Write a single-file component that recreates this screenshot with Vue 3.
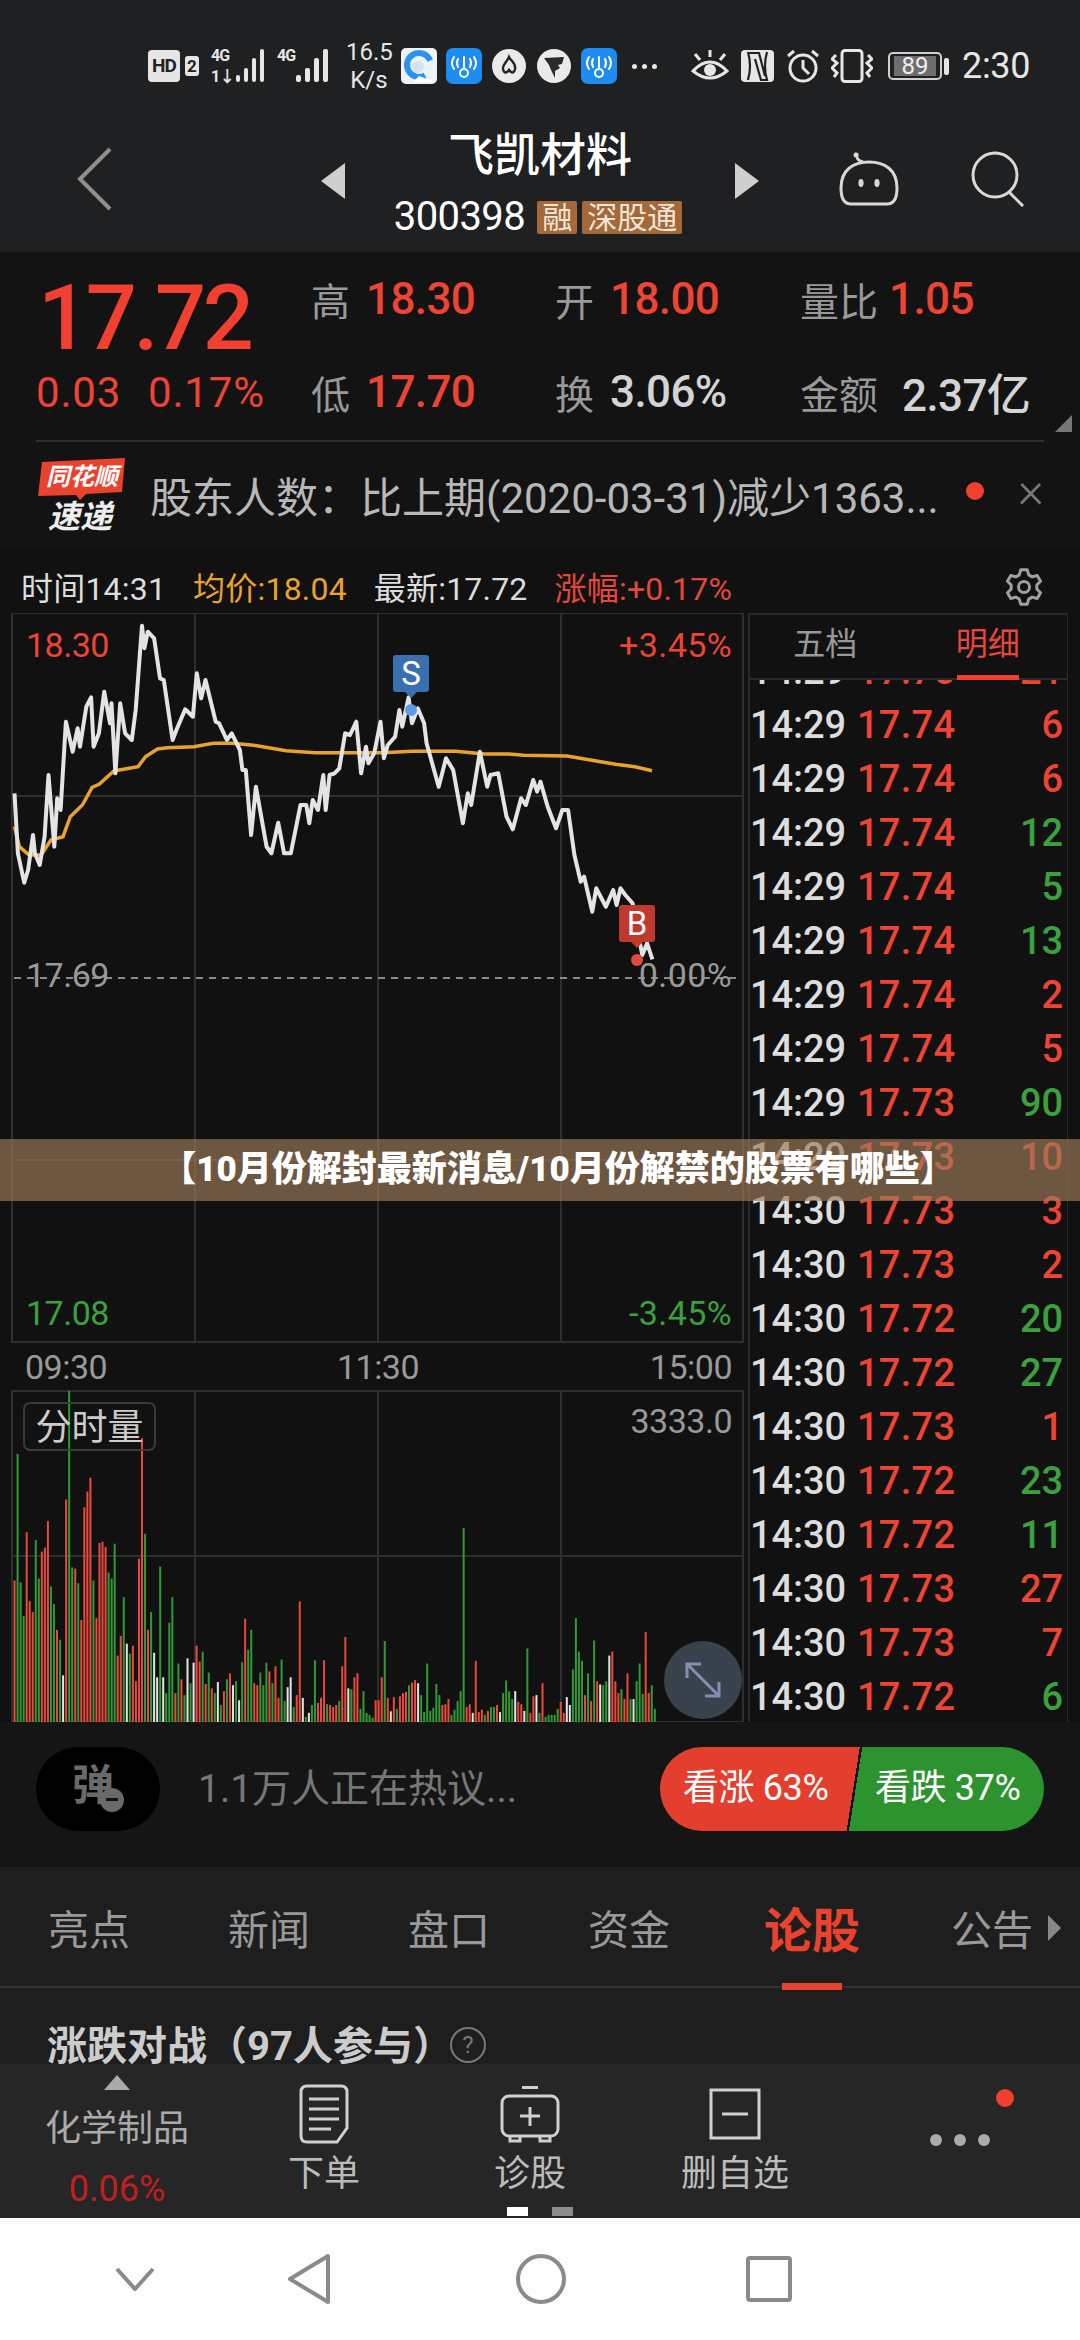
<script setup>
import { computed } from "vue";

// traced from the chart, coordinates are on a 2.063 / 3 grid above y=560
const priceRaw = "30,700 37,880 50,968 58,930 68,825 72,880 82,915 92,830 100,645 112,860 118,715 125,750 136,485 150,575 160,505 165,560 178,440 188,412 193,560 204,520 215,395 227,490 230,430 238,640 248,430 258,520 272,540 280,450 293,197 298,265 305,215 318,235 330,355 338,360 356,540 364,510 382,448 398,470 406,340 415,415 424,360 445,485 452,490 468,540 478,520 495,570 500,630 507,630 518,825 528,680 550,860 560,880 574,788 586,880 600,880 620,735 632,735 638,790 645,720 656,750 667,645 672,750 680,645 690,640 700,625 712,520 722,525 735,485 745,640 755,560 760,610 772,580 785,485 792,595 800,555 815,530 824,450 830,500 843,412 850,490 862,445 875,490 880,550 905,680 920,595 935,630 955,790 965,700 972,735 990,575 1005,680 1012,645 1028,640 1045,770 1058,808 1075,715 1085,735 1100,660 1108,695 1115,665 1130,740 1147,805 1160,750 1172,750 1185,885 1198,965 1205,950 1222,1055 1230,985 1250,1040 1265,990 1272,1035 1280,985 1290,1005 1305,1030 1315,1110 1325,1185 1335,1150 1346,1198";
const avgRaw = "30,800 40,860 60,885 85,885 105,840 130,830 145,770 170,735 190,682 205,672 235,633 285,620 300,590 325,567 345,563 400,560 440,550 480,550 530,557 590,572 650,578 790,578 850,574 940,574 1000,582 1050,582 1080,586 1170,588 1230,603 1270,613 1310,620 1345,632";

const toPoints = (raw) =>
  raw
    .split(" ")
    .map((p) => {
      const [x, y] = p.split(",").map(Number);
      return `${(x / 2.063).toFixed(1)},${(560 + y / 3).toFixed(1)}`;
    })
    .join(" ");

const pricePoints = toPoints(priceRaw);
const avgPoints = toPoints(avgRaw);

const volRaw = "r1165 g845 g1170 g1255 r1043 r1217 r1245 g1063 g1160 r1092 r1082 r1015 g1180 g1225 r1290 g1315 w1405 r960 g685 g1132 r1135 g1172 r1265 r980 r940 r905 g1165 r1260 r1070 r1067 r1080 g1145 g1160 g1072 r1355 r1305 g1207 w1325 g1350 r1330 r1420 r1110 r805 g1047 r1290 g1245 w1348 w1410 g1130 w1410 g1450 g1272 g1207 r1450 g1375 r1415 g1455 w1362 g1425 w1373 r1330 r1370 g1345 r1427 g1398 r1438 g1450 w1422 g1480 r1445 g1415 r1400 w1430 g1420 w1468 g1372 r1262 g1340 g1290 r1425 r1430 g1398 g1430 g1373 r1395 g1425 r1382 r1462 g1365 g1470 w1435 w1410 g1485 r1455 r1218 w1462 g1510 w1500 g1480 g1367 r1475 r1462 r1367 g1478 r1480 r1485 r1480 g1470 r1382 r1308 w1438 g1440 r1410 r1400 g1490 g1445 g1500 g1505 g1512 r1468 r1468 r1410 g1318 r1462 w1496 r1460 g1490 r1458 r1450 r1447 g1430 r1423 r1417 w1425 g1455 g1498 g1375 g1495 g1487 g1427 g1455 r1480 r1478 r1465 g1505 g1492 g1470 g1445 g1032 r1485 r1478 w1500 r1368 r1498 r1492 g1505 r1495 g1485 g1485 r1480 w1498 g1450 g1418 g1445 g1465 w1445 r1472 r1478 w1495 g1337 r1500 r1458 w1455 g1500 r1425 g1510 g1505 g1505 g1505 g1490 r1472 r1500 w1460 w1480 g1390 g1260 g1345 g1368 r1455 g1400 r1470 g1317 r1420 w1428 g1430 g1420 w1355 r1345 r1420 r1450 g1440 r1465 r1400 g1465 w1465 g1420 g1375 g1452 r1295 r1450 g1430 g1490";
const volColors = { r: "#ea4a3b", g: "#2f9a36", w: "#e4e4e4" };

const volBars = computed(() =>
  volRaw.split(" ").map((b, i) => {
    const top = 1120 + Number(b.slice(1)) / 2.53;
    return {
      x: (30 + i * 6.26) / 2.063 - 1,
      y: top,
      h: 1722 - top,
      fill: volColors[b[0]],
    };
  })
);

// six teeth, one straight up
const gearPath = computed(() => {
  const pts = [];
  for (let i = 0; i < 6; i++) {
    const a = -90 + i * 60;
    [[13, -21], [17.5, -11], [17.5, 11], [13, 21]].forEach(([r, d]) => {
      const rad = ((a + d) * Math.PI) / 180;
      pts.push(`${(19 + r * Math.cos(rad)).toFixed(1)} ${(19 + r * Math.sin(rad)).toFixed(1)}`);
    });
  }
  return `M${pts.join(" L")} Z`;
});

const ticks = [
  ["14:29", "17.75", "21", "r"],
  ["14:29", "17.74", "6", "r"],
  ["14:29", "17.74", "6", "r"],
  ["14:29", "17.74", "12", "g"],
  ["14:29", "17.74", "5", "g"],
  ["14:29", "17.74", "13", "g"],
  ["14:29", "17.74", "2", "r"],
  ["14:29", "17.74", "5", "r"],
  ["14:29", "17.73", "90", "g"],
  ["14:29", "17.73", "10", "r"],
  ["14:30", "17.73", "3", "r"],
  ["14:30", "17.73", "2", "r"],
  ["14:30", "17.72", "20", "g"],
  ["14:30", "17.72", "27", "g"],
  ["14:30", "17.73", "1", "r"],
  ["14:30", "17.72", "23", "g"],
  ["14:30", "17.72", "11", "g"],
  ["14:30", "17.73", "27", "r"],
  ["14:30", "17.73", "7", "r"],
  ["14:30", "17.72", "6", "g"],
];

const tabs = ["亮点", "新闻", "盘口", "资金", "论股", "公告"];
</script>

<template>
  <div class="page">
    <header class="top">
      <div class="status">
        <span class="hd">HD</span>
        <span class="sim">2</span>
        <svg class="sig" width="56" height="36" viewBox="0 0 56 36">
          <text x="0" y="13" class="sig-t">4G</text>
          <text x="0" y="34" class="sig-t">1↓</text>
          <rect x="25" y="27" width="4" height="7" rx="2" fill="#e6e6e6" />
          <rect x="33" y="20" width="4" height="14" rx="2" fill="#e6e6e6" />
          <rect x="41" y="10" width="4" height="24" rx="2" fill="#e6e6e6" />
          <rect x="49" y="1" width="4" height="33" rx="2" fill="#e6e6e6" />
        </svg>
        <svg class="sig sig2" width="56" height="36" viewBox="0 0 56 36">
          <text x="0" y="13" class="sig-t">4G</text>
          <rect x="19" y="27" width="5" height="7" rx="2" fill="#e6e6e6" />
          <rect x="28" y="20" width="5" height="14" rx="2" fill="#e6e6e6" />
          <rect x="37" y="10" width="5" height="24" rx="2" fill="#e6e6e6" />
          <rect x="46" y="1" width="5" height="33" rx="2" fill="#e6e6e6" />
        </svg>
        <span class="speed">16.5<br />K/s</span>
        <svg class="app" width="36" height="36" viewBox="0 0 36 36">
          <rect width="36" height="36" rx="5" fill="#eef3f8" />
          <circle cx="18" cy="17" r="12" fill="none" stroke="#2a93ee" stroke-width="6" stroke-dasharray="58 20" transform="rotate(60 18 17)" />
          <circle cx="17" cy="19" r="6" fill="#cfe3f5" />
          <path d="M18 28 L34 34 L12 34 Z" fill="#fff" />
        </svg>
        <svg class="app" width="36" height="36" viewBox="0 0 36 36">
          <rect width="36" height="36" rx="7" fill="#1e8cf0" />
          <g fill="none" stroke="#fff" stroke-width="2" stroke-linecap="round">
            <path d="M8 9 Q4 15 8 21 M12 11 Q10 15 12 19 M24 11 Q26 15 24 19 M28 9 Q32 15 28 21" />
            <circle cx="18" cy="25" r="4" />
            <path d="M18 9 V21" />
          </g>
        </svg>
        <svg class="app" width="36" height="36" viewBox="0 0 36 36">
          <circle cx="18" cy="18" r="17" fill="#eaeaea" />
          <path d="M18 9 C20 13 25 15 24 21 C23 26 20 25 18 22 C16 25 13 26 12 21 C11 17 16 14 18 9 Z" fill="none" stroke="#222" stroke-width="2.4" />
        </svg>
        <svg class="app" width="36" height="36" viewBox="0 0 36 36">
          <circle cx="18" cy="18" r="17" fill="#eaeaea" />
          <path d="M8 10 L28 9 L26 16 L22 17 L24 20 L19 23 L19 30 L15 22 L13 17 Z" fill="#2a2a2a" />
        </svg>
        <svg class="app" width="36" height="36" viewBox="0 0 36 36">
          <rect width="36" height="36" rx="7" fill="#1e8cf0" />
          <g fill="none" stroke="#fff" stroke-width="2" stroke-linecap="round">
            <path d="M8 9 Q4 15 8 21 M12 11 Q10 15 12 19 M24 11 Q26 15 24 19 M28 9 Q32 15 28 21" />
            <circle cx="18" cy="25" r="4" />
            <path d="M18 9 V21" />
          </g>
        </svg>
        <span class="more-dots"><i></i><i></i><i></i></span>
        <svg class="eye" width="38" height="34" viewBox="0 0 38 34" fill="none" stroke="#e6e6e6" stroke-width="3">
          <path d="M2 22 Q19 4 36 22 Q19 36 2 22 Z" />
          <circle cx="19" cy="21" r="6" fill="#e6e6e6" stroke="none" />
          <path d="M19 1 V8 M4 5 L9 11 M34 5 L29 11" />
        </svg>
        <svg class="nfc" width="33" height="32" viewBox="0 0 33 32">
          <rect width="33" height="32" rx="4" fill="#e6e6e6" />
          <path d="M7 2 Q11 16 7 30 M8 3 H18 L24 26 M14 9 L20 30 H26 Q22 16 26 2" fill="none" stroke="#1f2021" stroke-width="2.2" />
        </svg>
        <svg class="alarm" width="34" height="34" viewBox="0 0 34 34" fill="none" stroke="#e6e6e6" stroke-width="3">
          <circle cx="17" cy="19" r="13" />
          <path d="M17 11 V19 L23 25 M2 7 L8 2 M32 7 L26 2" />
        </svg>
        <svg class="vib" width="42" height="34" viewBox="0 0 42 34" fill="none" stroke="#e6e6e6" stroke-width="3">
          <rect x="11" y="1.5" width="20" height="31" rx="3" />
          <path d="M5 6 L1 10 L6 14 L1 19 L6 24 L3 28 M37 6 L41 10 L36 14 L41 19 L36 24 L39 28" />
        </svg>
        <span class="batt"><b>89</b></span>
        <span class="batt-nub"></span>
        <span class="clock">2:30</span>
      </div>

      <div class="nav">
        <svg class="back" width="37" height="64" viewBox="0 0 37 64">
          <path d="M34 2 L4 32 L34 62" fill="none" stroke="#8f8f8f" stroke-width="4" />
        </svg>
        <div class="stock">
          <svg class="arrow" width="24" height="36" viewBox="0 0 24 36"><path d="M24 0 V36 L0 18 Z" fill="#cfcfcf" /></svg>
          <div class="stock-info">
            <div class="stock-name">飞凯材料</div>
            <div class="stock-code">
              <span>300398</span>
              <em class="tag">融</em>
              <em class="tag">深股通</em>
            </div>
          </div>
          <svg class="arrow" width="24" height="36" viewBox="0 0 24 36"><path d="M0 0 V36 L24 18 Z" fill="#cfcfcf" /></svg>
        </div>
        <svg class="robot" width="60" height="54" viewBox="0 0 60 54" fill="none" stroke="#d8d8d8" stroke-width="3">
          <path d="M18 1 Q16 8 24 10" />
          <circle cx="17" cy="3" r="2.5" fill="#d8d8d8" stroke="none" />
          <path d="M2 36 C2 18 14 10 30 10 C46 10 58 18 58 36 C58 48 54 52 48 52 H12 C6 52 2 48 2 36 Z" />
          <ellipse cx="22" cy="31" rx="2.6" ry="4" fill="#d8d8d8" stroke="none" />
          <ellipse cx="38" cy="31" rx="2.6" ry="4" fill="#d8d8d8" stroke="none" />
        </svg>
        <svg class="search" width="54" height="56" viewBox="0 0 54 56" fill="none" stroke="#d8d8d8" stroke-width="3">
          <ellipse cx="24" cy="24" rx="22" ry="22" />
          <path d="M38 41 L52 55" />
        </svg>
      </div>
    </header>

    <section class="quote">
      <div class="quote-grid">
        <div class="cell"><span class="last">17.72</span></div>
        <div class="cell"><span class="lb one">高</span><span class="val up">18.30</span></div>
        <div class="cell"><span class="lb one">开</span><span class="val up">18.00</span></div>
        <div class="cell"><span class="lb">量比</span><span class="val up">1.05</span></div>
        <div class="cell change"><span class="up">0.03</span><span class="up">0.17%</span></div>
        <div class="cell"><span class="lb one">低</span><span class="val up">17.70</span></div>
        <div class="cell"><span class="lb one">换</span><span class="val plain">3.06%</span></div>
        <div class="cell"><span class="lb wide">金额</span><span class="val plain">2.37亿</span></div>
      </div>
      <i class="corner"></i>
      <div class="news">
        <svg class="news-logo" width="88" height="74" viewBox="0 0 88 74">
          <path d="M4 4 L87 0 L84 34 L48 36 L42 42 L38 37 L0 38 Z" fill="#e8432f" />
          <text x="44" y="27" text-anchor="middle" class="logo-a">同花顺</text>
          <text x="42" y="70" text-anchor="middle" class="logo-b">速递</text>
        </svg>
        <span class="news-text">股东人数：比上期(2020-03-31)减少1363...</span>
        <i class="news-dot"></i>
        <span class="news-x">×</span>
      </div>
    </section>

    <section class="market">
      <div class="chart-head">
        <span class="hd-time">时间14:31</span>
        <span class="hd-avg">均价:18.04</span>
        <span class="hd-new">最新:17.72</span>
        <span class="hd-pct">涨幅:+0.17%</span>
        <svg class="gear" width="38" height="38" viewBox="0 0 38 38" fill="none" stroke="#a0a0a0" stroke-width="3">
          <path :d="gearPath" stroke-linejoin="round" />
          <circle cx="19" cy="19" r="5.5" />
        </svg>
      </div>

      <div class="chart-body">
        <div class="canvas">
          <svg class="plot" width="748" height="1109" viewBox="0 613 748 1109">
            <g fill="none" stroke="#2e2e2e" stroke-width="2">
              <rect x="12" y="613" width="731" height="729" />
              <rect x="12" y="1391" width="731" height="331" />
              <path d="M195 613 V1342 M378 613 V1342 M561 613 V1342 M195 1391 V1722 M378 1391 V1722 M561 1391 V1722" />
              <path d="M12 796 H743 M12 1160 H743 M12 1556 H743" />
            </g>
            <path d="M14 978 H742" stroke="#8a8a8a" stroke-width="2" stroke-dasharray="7 6" />
            <polyline :points="avgPoints" fill="none" stroke="#e9a32c" stroke-width="3.5" />
            <polyline :points="pricePoints" fill="none" stroke="#e4e4e4" stroke-width="4" stroke-linejoin="round" />
            <rect v-for="(b, i) in volBars" :key="i" :x="b.x" :y="b.y" width="2" :height="b.h" :fill="b.fill" />
            <path d="M405 692 L411 698 L417 692 Z" fill="#3a6fb0" />
            <circle cx="411" cy="710" r="6" fill="#5a9be8" />
            <path d="M631 942 L637 948 L643 942 Z" fill="#c0392f" />
            <circle cx="637" cy="960" r="6" fill="#e04a3f" />
          </svg>

          <span class="axis up" style="left: 26px; top: 13px">18.30</span>
          <span class="axis up right pct" style="top: 13px">+3.45%</span>
          <span class="axis grey" style="left: 26px; top: 343px">17.69</span>
          <span class="axis grey right pct" style="top: 343px">0.00%</span>
          <span class="axis green" style="left: 26px; top: 681px">17.08</span>
          <span class="axis green right pct" style="top: 681px">-3.45%</span>
          <span class="axis grey" style="left: 25px; top: 735px">09:30</span>
          <span class="axis grey mid" style="top: 735px">11:30</span>
          <span class="axis grey right" style="top: 735px">15:00</span>
          <span class="axis grey right" style="top: 789px">3333.0</span>

          <span class="marker sell">S</span>
          <span class="marker buy">B</span>
          <span class="vol-tag">分时量</span>
          <span class="expand">
            <svg width="44" height="44" viewBox="0 0 44 44" fill="none" stroke="#8391b0" stroke-width="3">
              <path d="M6 6 L38 38 M6 20 V6 H20 M38 24 V38 H24" />
            </svg>
          </span>
        </div>

        <aside class="trades">
          <div class="trade-tabs">
            <span>五档</span>
            <span class="on">明细</span>
          </div>
          <div class="trade-list">
            <div v-for="(t, i) in ticks" :key="i" class="trade-row">
              <span class="t-time">{{ t[0] }}</span>
              <span class="t-price">{{ t[1] }}</span>
              <span class="t-vol" :class="t[3]">{{ t[2] }}</span>
            </div>
          </div>
        </aside>
      </div>

      <div class="banner">【10月份解封最新消息/10月份解禁的股票有哪些】</div>
    </section>

    <section class="vote">
      <div class="danmu">
        <span>弹</span>
        <i class="danmu-off"></i>
      </div>
      <span class="vote-text">1.1万人正在热议...</span>
      <div class="vote-pill">
        <span class="bull">看涨 63%</span>
        <span class="bear">看跌 37%</span>
      </div>
    </section>

    <nav class="tabs">
      <span v-for="(t, i) in tabs" :key="t" class="tab" :class="{ active: i === 4 }">{{ t }}</span>
      <i class="tab-more"></i>
    </nav>

    <div class="battle">
      <span>涨跌对战（97人参与）</span>
      <i class="help">?</i>
    </div>

    <footer class="actions">
      <div class="sector">
        <i class="sector-up"></i>
        <span class="sector-name">化学制品</span>
        <span class="sector-pct">0.06%</span>
      </div>
      <div class="act act-order">
        <svg width="50" height="60" viewBox="0 0 50 60" fill="none" stroke="#d0d0d0" stroke-width="3">
          <path d="M8 2 H42 Q48 2 48 8 V44 L38 58 H8 Q2 58 2 52 V8 Q2 2 8 2 Z" />
          <path d="M10 15 H40 M10 25 H40 M10 35 H40 M10 45 H32" />
        </svg>
        <span>下单</span>
      </div>
      <div class="act act-diag">
        <svg width="60" height="56" viewBox="0 0 60 56" fill="none" stroke="#d0d0d0" stroke-width="3">
          <path d="M22 1.5 H38" />
          <rect x="2" y="10" width="56" height="40" rx="7" />
          <path d="M30 21 V40 M20 30 H40 M10 50 V55 H20 V50 M40 50 V55 H50 V50" />
        </svg>
        <span>诊股</span>
      </div>
      <div class="act act-del">
        <svg width="52" height="52" viewBox="0 0 52 52" fill="none" stroke="#d0d0d0" stroke-width="3">
          <rect x="2" y="2" width="48" height="48" />
          <path d="M13 26 H39" />
        </svg>
        <span>删自选</span>
      </div>
      <div class="act-more">
        <i class="more-red"></i>
        <i class="d"></i><i class="d"></i><i class="d"></i>
      </div>
      <div class="pager"><i class="cur"></i><i></i></div>
    </footer>

    <div class="sysnav">
      <svg class="n-down" width="40" height="24" viewBox="0 0 40 24"><path d="M2 2 L20 22 L38 2" fill="none" stroke="#8a8a8a" stroke-width="4" /></svg>
      <svg class="n-back" width="46" height="52" viewBox="0 0 46 52"><path d="M42 3 V49 L4 26 Z" fill="none" stroke="#8a8a8a" stroke-width="4" stroke-linejoin="round" /></svg>
      <svg class="n-home" width="52" height="52" viewBox="0 0 52 52"><circle cx="26" cy="26" r="23" fill="none" stroke="#8a8a8a" stroke-width="4" /></svg>
      <svg class="n-recent" width="46" height="46" viewBox="0 0 46 46"><rect x="2" y="2" width="42" height="42" rx="2" fill="none" stroke="#8a8a8a" stroke-width="4" /></svg>
    </div>
  </div>
</template>

<style scoped>
.page {
  position: relative;
  width: 1080px;
  height: 2340px;
  overflow: hidden;
  display: flex;
  flex-direction: column;
  background: #111;
  color: #ddd;
  font-family: Roboto, "Noto Sans CJK SC", sans-serif;
}

i,
em {
  font-style: normal;
}

.top {
  height: 252px;
  background: #1f2021;
}

.status {
  height: 110px;
  padding: 22px 0 0 148px;
  box-sizing: border-box;
  display: flex;
  align-items: center;
  color: #e6e6e6;
}

.hd {
  width: 32px;
  height: 32px;
  border-radius: 4px;
  background: #e6e6e6;
  color: #222;
  font-size: 19px;
  font-weight: 700;
  line-height: 32px;
  text-align: center;
  letter-spacing: -1px;
}

.sim {
  width: 14px;
  height: 20px;
  margin-left: 5px;
  border-radius: 3px;
  background: #e6e6e6;
  color: #222;
  font-size: 17px;
  font-weight: 700;
  line-height: 20px;
  text-align: center;
}

.sig {
  margin-left: 12px;
}

.sig2 {
  margin-left: 10px;
}

.sig-t {
  font-size: 16px;
  font-weight: 700;
  fill: #e6e6e6;
  letter-spacing: -1px;
}

.speed {
  width: 46px;
  margin-left: 13px;
  font-size: 24px;
  line-height: 28px;
  text-align: center;
}

.app {
  margin-left: 9px;
  flex: none;
}

.more-dots {
  display: flex;
  gap: 5px;
  margin-left: 15px;
  width: 26px;
}

.more-dots i {
  width: 5px;
  height: 5px;
  border-radius: 50%;
  background: #e6e6e6;
}

.eye {
  margin-left: 33px;
}

.nfc {
  margin-left: 12px;
}

.alarm {
  margin-left: 12px;
}

.vib {
  margin-left: 11px;
}

.batt {
  width: 54px;
  height: 28px;
  margin-left: 15px;
  box-sizing: border-box;
  border: 2px solid #cfcfcf;
  border-radius: 5px;
  padding: 2px 4px;
}

.batt b {
  display: block;
  width: 42px;
  height: 20px;
  background: #6e6e6e;
  color: #eee;
  font-size: 24px;
  font-weight: 400;
  line-height: 21px;
  text-align: center;
}

.batt-nub {
  width: 5px;
  height: 17px;
  margin-left: 2px;
  border-radius: 2px;
  background: #e6e6e6;
}

.clock {
  margin-left: 13px;
  font-size: 36px;
  letter-spacing: -0.3px;
}

.nav {
  position: relative;
  height: 142px;
  display: flex;
  align-items: center;
  padding-left: 76px;
}

.back {
  margin-top: -4px;
}

.stock {
  width: 438px;
  margin-left: 208px;
  display: flex;
  align-items: center;
  justify-content: space-between;
}

.stock-info {
  text-align: center;
  margin-top: -6px;
}

.stock-name {
  height: 62px;
  color: #fff;
  font-size: 46px;
  font-weight: 500;
  line-height: 66px;
}

.stock-code {
  margin-top: 16px;
  margin-left: -4px;
  display: flex;
  align-items: center;
  gap: 5px;
  color: #fff;
  font-size: 40px;
  line-height: 34px;
  letter-spacing: -0.6px;
}

.stock-code span {
  margin-right: 7px;
}

.tag {
  padding: 0 5px;
  height: 33px;
  border-radius: 2px;
  background: #a3693a;
  color: #f3e6d8;
  font-size: 30px;
  line-height: 33px;
  letter-spacing: 0;
}

.robot {
  margin-left: 80px;
  margin-top: -4px;
}

.search {
  margin-left: 72px;
  margin-top: -4px;
}

.quote {
  position: relative;
  height: 296px;
  background: #131313;
}

.quote-grid {
  display: grid;
  grid-template-columns: 273px 244px 245px auto;
  grid-template-rows: 94px 92px;
  padding-left: 38px;
}

.cell {
  display: flex;
  align-items: center;
}

.last {
  margin-top: 40px;
  color: #f1402f;
  font-size: 90px;
  font-weight: 500;
  letter-spacing: -3.4px;
  line-height: 88px;
}

.lb {
  margin-right: 11px;
  color: #999;
  font-size: 39px;
}

.lb.one {
  margin-right: 16px;
}

.lb.wide {
  margin-right: 24px;
}

.val {
  font-size: 44px;
  font-weight: 500;
  letter-spacing: -0.6px;
}

.up {
  color: #ee4433;
}

.plain {
  color: #d4d4d4;
}

.change {
  gap: 27px;
  margin-left: -2px;
  font-size: 42px;
  letter-spacing: 0.8px;
  white-space: nowrap;
}

.corner {
  position: absolute;
  right: 8px;
  top: 163px;
  border-left: 17px solid transparent;
  border-bottom: 17px solid #777;
}

.news {
  position: relative;
  height: 107px;
  margin: 2px 36px 0;
  border-top: 2px solid #2c2c2c;
  box-sizing: border-box;
  display: flex;
  align-items: center;
}

.news-logo {
  margin-left: 2px;
  flex: none;
}

.logo-a {
  fill: #fff;
  font-size: 24px;
  font-weight: 700;
  font-style: italic;
}

.logo-b {
  fill: #eee;
  font-size: 32px;
  font-weight: 700;
  font-style: italic;
}

.news-text {
  margin-left: 24px;
  color: #b8b8b8;
  font-size: 42px;
  white-space: nowrap;
}

.news-dot {
  position: absolute;
  left: 930px;
  top: 40px;
  width: 18px;
  height: 18px;
  border-radius: 50%;
  background: #f1402f;
}

.news-x {
  position: absolute;
  right: 0;
  top: 18px;
  color: #777;
  font-size: 50px;
  font-weight: 300;
  line-height: 60px;
}

.market {
  position: relative;
  margin-top: 10px;
  background: #111;
}

.chart-head {
  position: relative;
  height: 55px;
  display: flex;
  align-items: center;
  font-size: 32px;
  letter-spacing: 0.2px;
}

.hd-time {
  margin-left: 21px;
  color: #ddd;
}

.hd-avg {
  margin-left: 27px;
  color: #e9a32c;
}

.hd-new {
  margin-left: 27px;
  color: #ddd;
}

.hd-pct {
  margin-left: 27px;
  color: #e5483a;
}

.gear {
  position: absolute;
  left: 1005px;
  top: 10px;
}

.chart-body {
  display: flex;
}

.canvas {
  position: relative;
  width: 748px;
  height: 1109px;
  flex: none;
}

.plot {
  display: block;
}

.axis {
  position: absolute;
  font-size: 34px;
  line-height: 38px;
  letter-spacing: -0.5px;
}

.axis.right {
  right: 16px;
}

.axis.pct {
  letter-spacing: 0.4px;
}

.axis.mid {
  left: 378px;
  transform: translateX(-50%);
}

.grey {
  color: #999;
}

.green {
  color: #3ba13f;
}

.marker {
  position: absolute;
  width: 36px;
  height: 37px;
  border-radius: 3px;
  color: #fff;
  font-size: 33px;
  line-height: 37px;
  text-align: center;
}

.sell {
  left: 393px;
  top: 42px;
  background: #3a6fb0;
}

.buy {
  left: 619px;
  top: 292px;
  background: #c0392f;
}

.vol-tag {
  position: absolute;
  left: 23px;
  top: 789px;
  width: 133px;
  height: 49px;
  box-sizing: border-box;
  border: 2px solid #3a3a3a;
  border-radius: 7px;
  color: #ccc;
  font-size: 36px;
  line-height: 48px;
  text-align: center;
}

.expand {
  position: absolute;
  left: 664px;
  top: 1028px;
  width: 78px;
  height: 78px;
  border-radius: 50%;
  background: rgba(66, 76, 88, 0.85);
  display: flex;
  align-items: center;
  justify-content: center;
}

.trades {
  width: 320px;
  height: 1109px;
  box-sizing: border-box;
  border: solid #2a2a2a;
  border-width: 2px 1px 0 2px;
  display: flex;
  flex-direction: column;
}

.trade-tabs {
  height: 63px;
  flex: none;
  border-bottom: 2px solid #2a2a2a;
  display: flex;
  position: relative;
  color: #999;
  font-size: 32px;
}

.trade-tabs span {
  width: 50%;
  text-align: center;
  line-height: 58px;
}

.trade-tabs span:first-child {
  margin-left: -4px;
}

.trade-tabs .on {
  margin-left: 4px;
  color: #e5483a;
  position: relative;
}

.trade-tabs .on::after {
  content: "";
  position: absolute;
  left: 48px;
  right: 48px;
  bottom: -2px;
  height: 5px;
  background: #f1402f;
}

.trade-list {
  flex: 1;
  overflow: hidden;
}

.trade-row {
  height: 54px;
  display: flex;
  align-items: center;
  padding-right: 4px;
  font-size: 38px;
  font-weight: 500;
  letter-spacing: -0.1px;
}

.trade-row:first-child {
  margin-top: -36px;
}

.t-time {
  color: #ddd;
}

.t-price {
  margin-left: 11px;
  color: #ee4433;
  letter-spacing: 0.3px;
}

.t-vol {
  margin-left: auto;
}

.t-vol.r {
  color: #ee4433;
}

.t-vol.g {
  color: #3ba13f;
}

.banner {
  position: absolute;
  left: 0;
  right: 0;
  top: 581px;
  height: 62px;
  padding-left: 36px;
  box-sizing: border-box;
  background: rgba(157, 123, 90, 0.67);
  color: #fff;
  font-size: 35px;
  font-weight: 900;
  line-height: 62px;
  text-align: center;
  white-space: nowrap;
}

.vote {
  position: relative;
  height: 145px;
  background: #151515;
  display: flex;
  align-items: flex-start;
  padding: 25px 36px 0;
  box-sizing: border-box;
}

.danmu {
  position: relative;
  width: 124px;
  height: 84px;
  border-radius: 42px;
  background: #000;
  color: #6a6a6a;
  font-size: 42px;
  font-weight: 700;
  line-height: 78px;
  box-sizing: border-box;
  padding-left: 36px;
}

.danmu-off {
  position: absolute;
  left: 64px;
  top: 41px;
  width: 24px;
  height: 24px;
  border-radius: 50%;
  background: #6a6a6a;
}

.danmu-off::after {
  content: "";
  position: absolute;
  left: 6px;
  top: 10px;
  width: 12px;
  height: 3px;
  background: #111;
}

.vote-text {
  margin-left: 38px;
  color: #777;
  font-size: 39px;
  line-height: 84px;
}

.vote-pill {
  position: absolute;
  left: 660px;
  top: 25px;
  width: 384px;
  height: 84px;
  border-radius: 42px;
  overflow: hidden;
  background: linear-gradient(99deg, #e43f2e 0 50.3%, #131313 50.3% 50.9%, #2c932e 50.9%);
  color: #fff;
  font-size: 36px;
  line-height: 82px;
  letter-spacing: -0.4px;
}

.bull {
  position: absolute;
  left: 23px;
}

.bear {
  position: absolute;
  left: 215px;
}

.tabs {
  position: relative;
  height: 121px;
  background: #1e1e1e;
  border-bottom: 2px solid #333;
  box-sizing: border-box;
  display: flex;
  align-items: center;
  padding: 0 48px;
  gap: 98px;
  color: #999;
  font-size: 41px;
}

.tab {
  flex: none;
  width: 82px;
  text-align: center;
}

.tab.active {
  margin: 0 -7px 0 -4px;
  width: 96px;
  color: #e9432f;
  font-size: 48px;
  font-weight: 700;
  position: relative;
}

.tab.active::after {
  content: "";
  position: absolute;
  left: 18px;
  width: 60px;
  bottom: -28px;
  height: 7px;
  background: #e5432f;
}

.tab-more {
  position: absolute;
  left: 1048px;
  top: 48px;
  border-left: 13px solid #888;
  border-top: 13px solid transparent;
  border-bottom: 13px solid transparent;
}

.battle {
  height: 76px;
  background: #1e1e1e;
  overflow: hidden;
  display: flex;
  align-items: flex-start;
  padding: 35px 0 0 47px;
  box-sizing: border-box;
  color: #ccc;
  font-size: 40px;
  font-weight: 700;
  line-height: 48px;
}

.help {
  margin: 4px 0 0 -3px;
  width: 36px;
  height: 36px;
  flex: none;
  box-sizing: border-box;
  border: 2px solid #777;
  border-radius: 50%;
  color: #777;
  font-size: 24px;
  font-weight: 400;
  line-height: 32px;
  text-align: center;
}

.actions {
  position: relative;
  height: 154px;
  background: #262626;
  display: flex;
  color: #bbb;
}

.sector {
  position: relative;
  width: 234px;
  display: flex;
  flex-direction: column;
  align-items: center;
}

.sector-up {
  margin-top: 11px;
  border-left: 13px solid transparent;
  border-right: 13px solid transparent;
  border-bottom: 15px solid #aaa;
}

.sector-name {
  margin-top: 17px;
  color: #aaa;
  font-size: 36px;
  line-height: 44px;
}

.sector-pct {
  margin-top: 16px;
  color: #c01f1f;
  font-size: 36px;
  line-height: 44px;
}

.act {
  position: absolute;
  top: 20px;
  width: 140px;
  display: flex;
  flex-direction: column;
  align-items: center;
  font-size: 36px;
  line-height: 44px;
}

.act svg {
  height: 60px;
  margin-bottom: 8px;
}

.act-order {
  left: 254px;
}

.act-diag {
  left: 460px;
}

.act-del {
  left: 665px;
}

.act-more {
  position: absolute;
  left: 930px;
  top: 70px;
  display: flex;
  gap: 12px;
}

.act-more .d {
  width: 12px;
  height: 12px;
  border-radius: 50%;
  background: #aaa;
}

.more-red {
  position: absolute;
  left: 66px;
  top: -45px;
  width: 18px;
  height: 18px;
  border-radius: 50%;
  background: #f1402f;
}

.pager {
  position: absolute;
  left: 507px;
  top: 143px;
  display: flex;
  gap: 24px;
}

.pager i {
  width: 21px;
  height: 9px;
  background: #8d8d8d;
}

.pager .cur {
  background: #fff;
}

.sysnav {
  height: 122px;
  background: #fdfdfd;
  display: flex;
  align-items: center;
  padding-left: 115px;
}

.n-back {
  margin-left: 131px;
}

.n-home {
  margin-left: 183px;
}

.n-recent {
  margin-left: 179px;
}
</style>

<style>
body {
  margin: 0;
  background: #111;
}
</style>
